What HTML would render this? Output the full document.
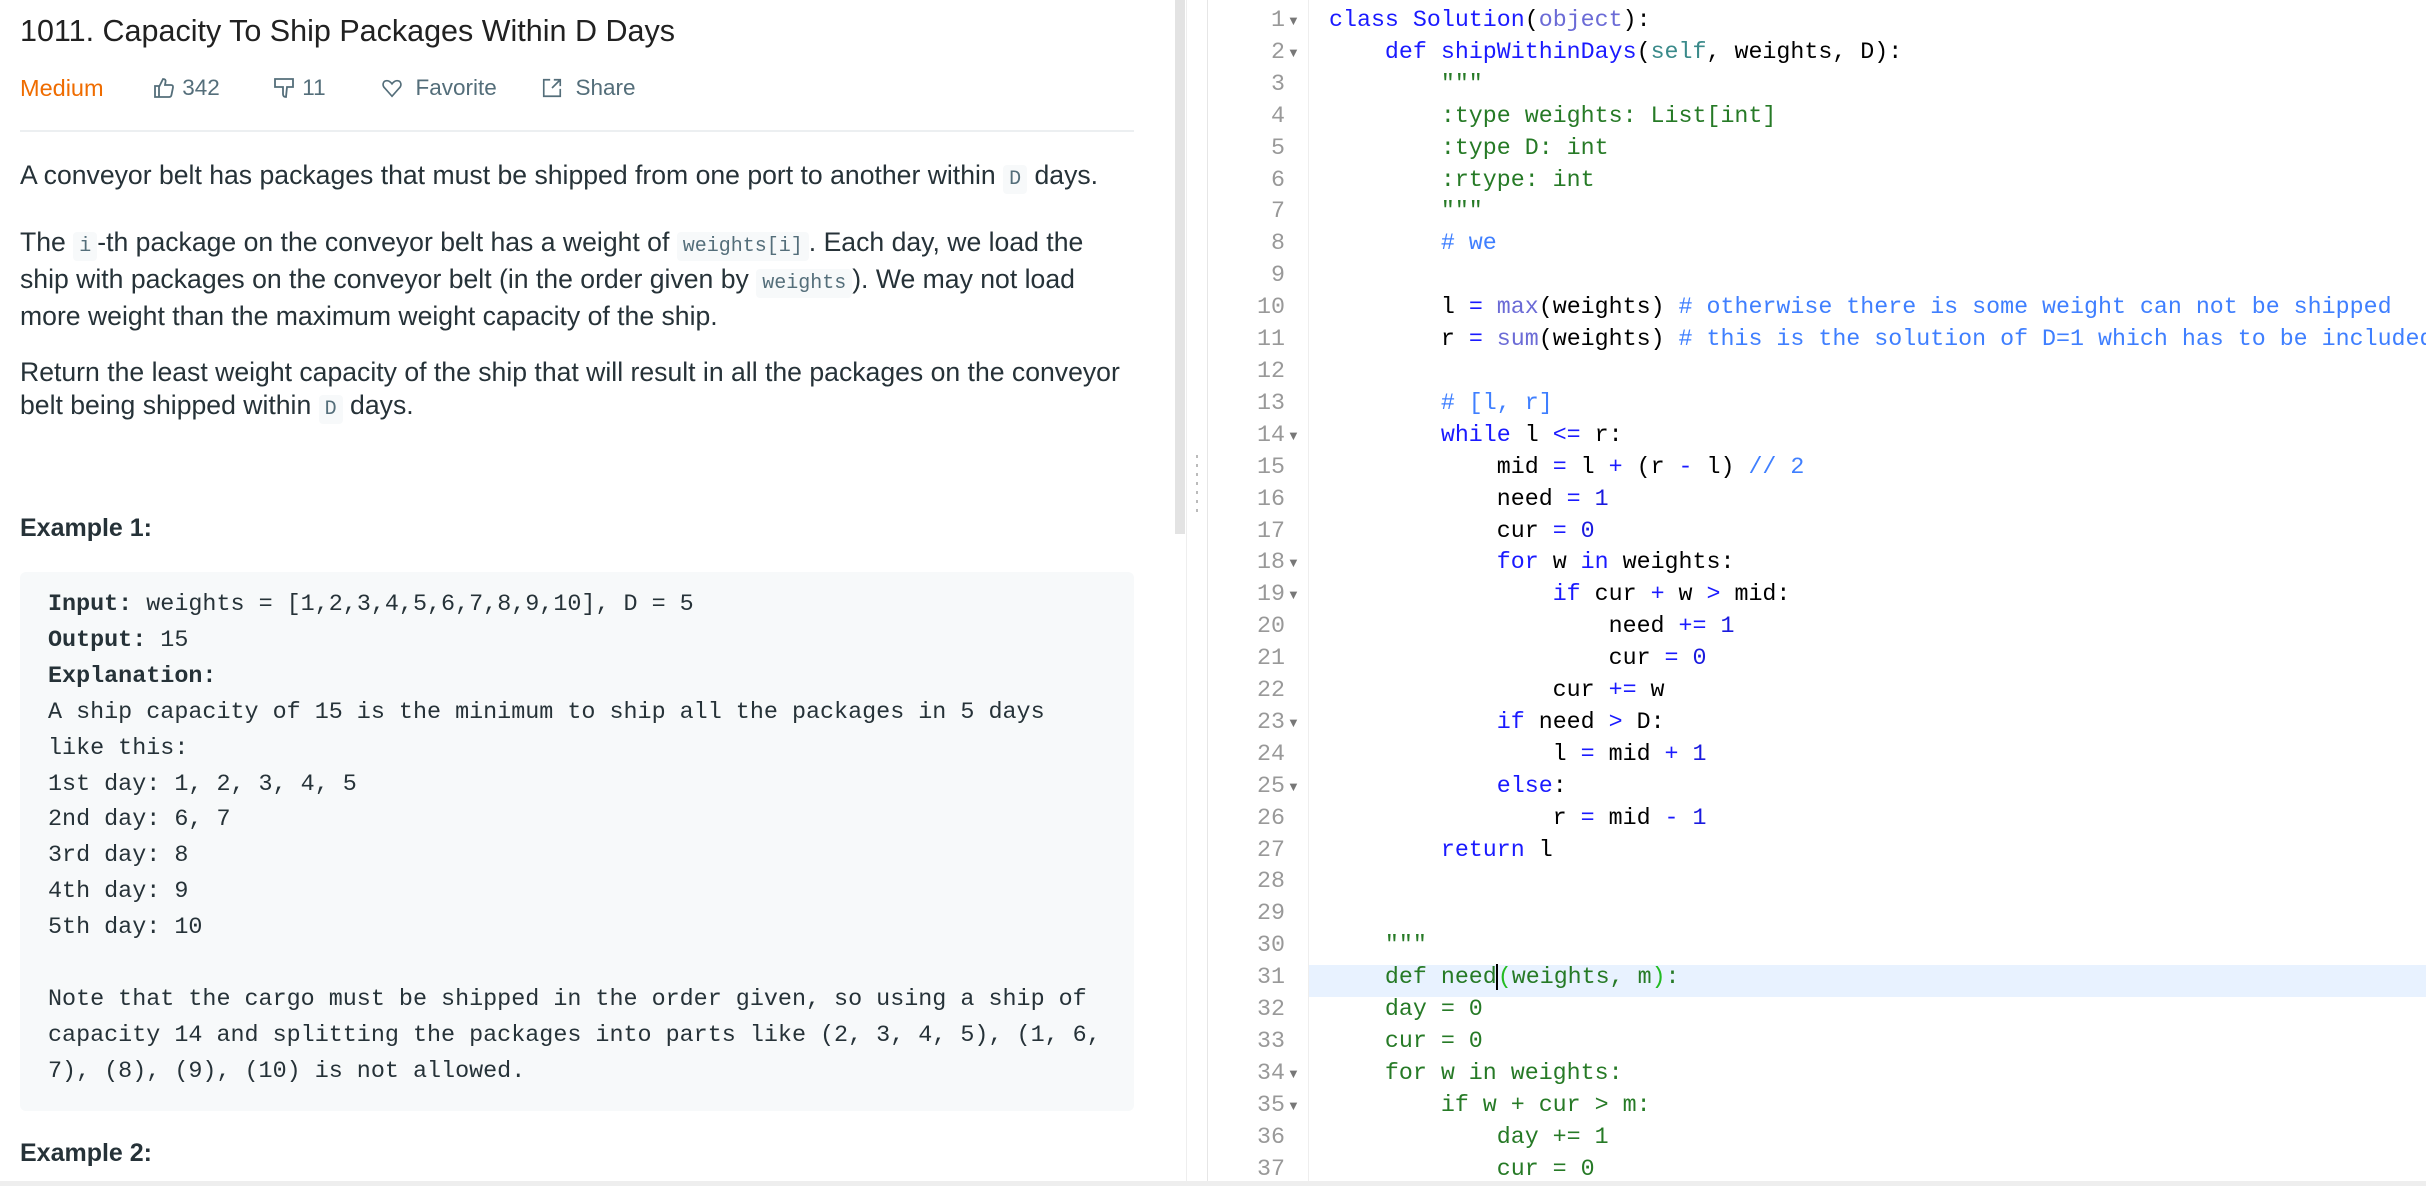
<!DOCTYPE html>
<html><head><meta charset="utf-8"><style>
*{margin:0;padding:0;box-sizing:border-box}
body{width:2426px;height:1186px;overflow:hidden;background:#fff;font-family:"Liberation Sans",sans-serif;color:#263238;position:relative}
.abs{position:absolute}
.p{font-size:26.6px;line-height:33px;left:20px;width:1118px}
code{font-family:"Liberation Mono",monospace;font-size:20px;background:#f7f9fa;color:#546e7a;padding:3px 6px;border-radius:4px}
pre{font-family:"Liberation Mono",monospace;font-size:23.4px;line-height:35.9px;color:#263238}
.meta{top:75px;font-size:22.5px;color:#546e7a;display:flex;align-items:center}
.code{left:1329px;top:5px;font-family:"Liberation Mono",monospace;font-size:23.3px;line-height:31.9px;white-space:pre;color:#000}
.ln{left:1225px;top:5px;width:60px;text-align:right;font-family:"Liberation Mono",monospace;font-size:23.3px;line-height:31.9px;color:#999;white-space:pre}
.ar{left:1287px;top:5px;font-size:13px;line-height:31.9px;color:#777;white-space:pre}
.k{color:#1a1aff}.c{color:#3f7fff}.s{color:#267a26}.b{color:#6b6bd6}.n{color:#1a1adf}.o{color:#1a1aff}.sf{color:#3a8a8a}
</style></head><body>
<div class="abs" style="left:20px;top:14px;font-size:30.5px;font-weight:500;color:#212121">1011. Capacity To Ship Packages Within D Days</div>
<div class="abs meta" style="left:20px;color:#ef6c00;font-size:23.5px">Medium</div>
<div class="abs meta" style="left:152px"><svg width="24" height="24" viewBox="0 0 24 24" fill="none" stroke="#546e7a" stroke-width="1.8"><path d="M3 10h4v11H3zM7 11l4-8c2 0 3 1 2.5 3L13 9h6c1.5 0 2.3 1 2 2.4l-1.6 7.8c-.3 1.2-1 1.8-2.2 1.8H7"/></svg>&nbsp;342</div>
<div class="abs meta" style="left:272px"><svg width="24" height="24" viewBox="0 0 24 24" fill="none" stroke="#546e7a" stroke-width="1.8"><path d="M3 3h18v8h-6l-1 10c-2 0-3-1-3-3V11H3z"/></svg>&nbsp;11</div>
<div class="abs meta" style="left:381px"><svg width="22" height="22" viewBox="0 0 24 24" fill="none" stroke="#546e7a" stroke-width="1.8"><path d="M12 21L4 12C1 9 2 4 6.5 4c2.5 0 4 1.5 5.5 3.5C13.5 5.5 15 4 17.5 4 22 4 23 9 20 12z"/></svg>&nbsp;&nbsp;Favorite</div>
<div class="abs meta" style="left:541px"><svg width="22" height="22" viewBox="0 0 24 24" fill="none" stroke="#546e7a" stroke-width="1.8"><path d="M10 3H3v18h18v-8M14 3h7v7M21 3l-9 9"/></svg>&nbsp;&nbsp;Share</div>
<div class="abs" style="left:20px;top:130px;width:1114px;height:2px;background:#eceff1"></div>
<div class="abs p" style="top:159px">A conveyor belt has packages that must be shipped from one port to another within <code>D</code> days.</div>
<div class="abs p" style="top:226px">The <code>i</code>-th package on the conveyor belt has a weight of <code>weights[i]</code>. Each day, we load the ship with packages on the conveyor belt (in the order given by <code>weights</code>). We may not load more weight than the maximum weight capacity of the ship.</div>
<div class="abs p" style="top:356px">Return the least weight capacity of the ship that will result in all the packages on the conveyor belt being shipped within <code>D</code> days.</div>
<div class="abs" style="left:20px;top:514px;font-size:25px;font-weight:bold">Example 1:</div>
<div class="abs" style="left:20px;top:572px;width:1114px;height:539px;background:#f7f9fa;border-radius:6px"></div>
<pre class="abs" style="left:48px;top:588px"><b>Input:</b> weights = [1,2,3,4,5,6,7,8,9,10], D = 5
<b>Output:</b> 15
<b>Explanation:</b>
A ship capacity of 15 is the minimum to ship all the packages in 5 days
like this:
1st day: 1, 2, 3, 4, 5
2nd day: 6, 7
3rd day: 8
4th day: 9
5th day: 10

Note that the cargo must be shipped in the order given, so using a ship of
capacity 14 and splitting the packages into parts like (2, 3, 4, 5), (1, 6,
7), (8), (9), (10) is not allowed.</pre>
<div class="abs" style="left:20px;top:1139px;font-size:25px;font-weight:bold">Example 2:</div>
<div class="abs" style="left:1175px;top:0;width:10px;height:534px;background:#e3e3e3"></div>
<div class="abs" style="left:1186px;top:0;width:1px;height:1186px;background:#eee"></div>
<div class="abs" style="left:1207px;top:0;width:1px;height:1186px;background:#e6e6e6"></div>
<div class="abs" style="left:1196px;top:455px;width:2px;height:62px;background:repeating-linear-gradient(#bbb 0 3px,transparent 3px 9px)"></div>
<div class="abs" style="left:1308px;top:0;width:1px;height:1186px;background:#eee"></div>
<div class="abs" style="left:1309px;top:965px;width:1117px;height:32px;background:#e8f2ff"></div>
<div class="abs" style="left:0;top:1181px;width:2426px;height:5px;background:#eee"></div>
<div class="abs ln">1
2
3
4
5
6
7
8
9
10
11
12
13
14
15
16
17
18
19
20
21
22
23
24
25
26
27
28
29
30
31
32
33
34
35
36
37</div>
<div class="abs ar">▼
▼











▼



▼
▼



▼

▼








▼
▼</div>
<div class="abs code"><span class="k">class</span> <span class="k">Solution</span>(<span class="b">object</span>):
    <span class="k">def</span> <span class="k">shipWithinDays</span>(<span class="sf">self</span>, weights, D):
        <span class="s">"""
        :type weights: List[int]
        :type D: int
        :rtype: int
        """</span>
        <span class="c"># we</span>

        l <span class="o">=</span> <span class="b">max</span>(weights) <span class="c"># otherwise there is some weight can not be shipped</span>
        r <span class="o">=</span> <span class="b">sum</span>(weights) <span class="c"># this is the solution of D=1 which has to be included</span>

        <span class="c"># [l, r]</span>
        <span class="k">while</span> l <span class="o">&lt;=</span> r:
            mid <span class="o">=</span> l <span class="o">+</span> (r <span class="o">-</span> l) <span class="c">// 2</span>
            need <span class="o">=</span> <span class="n">1</span>
            cur <span class="o">=</span> <span class="n">0</span>
            <span class="k">for</span> w <span class="k">in</span> weights:
                <span class="k">if</span> cur <span class="o">+</span> w <span class="o">&gt;</span> mid:
                    need <span class="o">+=</span> <span class="n">1</span>
                    cur <span class="o">=</span> <span class="n">0</span>
                cur <span class="o">+=</span> w
            <span class="k">if</span> need <span class="o">&gt;</span> D:
                l <span class="o">=</span> mid <span class="o">+</span> <span class="n">1</span>
            <span class="k">else</span>:
                r <span class="o">=</span> mid <span class="o">-</span> <span class="n">1</span>
        <span class="k">return</span> l


    <span class="s">"""
    def need<span style="border-left:2px solid #000;margin-left:-1px"></span><span style="color:#22bb22">(</span>weights, m<span style="color:#22bb22">)</span>:
    day = 0
    cur = 0
    for w in weights:
        if w + cur &gt; m:
            day += 1
            cur = 0</span></div>
</body></html>
